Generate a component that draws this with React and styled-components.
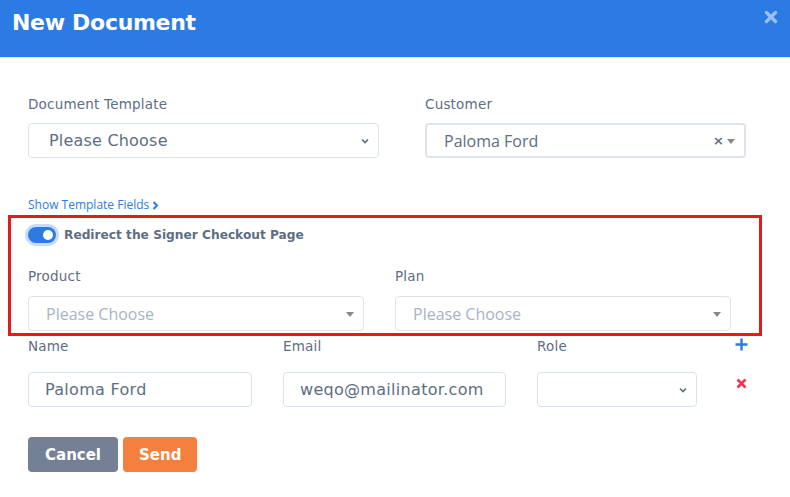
import styled, { createGlobalStyle } from "styled-components";

const GlobalStyle = createGlobalStyle`
  * { box-sizing: border-box; }
  body {
    margin: 0;
    background: #fff;
    font-family: "DejaVu Sans", "Open Sans", sans-serif;
  }
`;

const Modal = styled.div`
  width: 790px;
  height: 497px;
  background: #fff;
  overflow: hidden;
`;

const Header = styled.div`
  height: 58px;
  background: #2c7be5;
  border-bottom: 1px solid #e3e8ef;
  display: flex;
  justify-content: space-between;
  align-items: flex-start;
  padding: 8px 12px 0 12px;
`;

const Title = styled.h1`
  margin: 0;
  color: #fff;
  font-family: "DejaVu Sans", sans-serif;
  font-weight: 700;
  font-size: 22px;
  line-height: 30px;
  letter-spacing: -0.3px;
`;

const CloseBtn = styled.button`
  border: 0;
  background: none;
  padding: 0;
  margin-top: 2px;
  margin-right: 0;
  width: 14px;
  height: 14px;
  cursor: pointer;
`;

const Body = styled.div`
  padding: 36px 28px 0 28px;
`;

const TwoCols = styled.div`
  display: grid;
  grid-template-columns: ${(p) => p.$cols};
  column-gap: ${(p) => p.$gap}px;
`;

const Label = styled.label`
  display: block;
  font-family: "DejaVu Sans", sans-serif;
  font-size: 13.5px;
  letter-spacing: 0.2px;
  line-height: 20px;
  color: #5e6e82;
  margin-bottom: ${(p) => p.$mb ?? 9}px;
`;

const NativeSelect = styled.div`
  height: 35px;
  border: 1px solid #d8e2ef;
  border-radius: 4px;
  display: flex;
  align-items: center;
  justify-content: space-between;
  padding: 0 8px 0 20px;
  font-family: "DejaVu Sans", sans-serif;
  font-size: 16px;
  letter-spacing: 0.2px;
  color: #5e6e82;
  background: #fff;
`;

const Select2 = styled.div`
  height: 35px;
  border: ${(p) => (p.$thick ? "2px" : "1px")} solid #dfe4ec;
  border-radius: 4px;
  display: flex;
  align-items: center;
  padding: 0 9px 0 ${(p) => p.$pl}px;
  font-family: "Open Sans", sans-serif;
  font-size: 16px;
  color: ${(p) => (p.$placeholder ? "#a9b4c2" : "#5e6e82")};
  background: #fff;
`;

const Grow = styled.span`
  flex: 1;
`;

const Clear = styled.span`
  font-size: 13px;
  font-weight: 700;
  color: #5e6e82;
  margin-right: 3px;
  font-family: "DejaVu Sans", sans-serif;
`;

const Caret = styled.span`
  width: 0;
  height: 0;
  border-left: 4px solid transparent;
  border-right: 4px solid transparent;
  border-top: 5px solid #888;
  margin-top: 1px;
`;

const ShowLink = styled.a`
  display: inline-flex;
  align-items: center;
  gap: 3px;
  margin-top: 39px;
  font-family: "Open Sans", sans-serif;
  font-size: 12px;
  line-height: 16px;
  color: #2c7be5;
  text-decoration: none;
`;

const Annotated = styled.section`
  margin: 2px 0 0 -20px;
  width: 754px;
  border: 3px solid #e31b1b;
  padding: 9px 27px 2px 17px;
`;

const SwitchRow = styled.div`
  display: flex;
  align-items: center;
  gap: 8px;
  height: 16px;
  margin-bottom: 23px;
`;

const Switch = styled.span`
  position: relative;
  width: 28px;
  height: 16px;
  border-radius: 8px;
  background: #2c7be5;
  box-shadow: 0 0 0 3px #c9dcf7;
  &::after {
    content: "";
    position: absolute;
    top: 3px;
    right: 3px;
    width: 10px;
    height: 10px;
    border-radius: 50%;
    background: #fff;
  }
`;

const SwitchText = styled.span`
  font-family: "DejaVu Sans", sans-serif;
  font-size: 12.2px;
  font-weight: 700;
  color: #5e6e82;
`;

const Input = styled.div`
  height: 35px;
  border: 1px solid #d8e2ef;
  border-radius: 4px;
  display: flex;
  align-items: center;
  padding: 0 16px;
  font-family: "DejaVu Sans", sans-serif;
  font-size: 16px;
  letter-spacing: 0.3px;
  color: #5e6e82;
  white-space: nowrap;
`;

const IconCell = styled.div`
  display: flex;
  justify-content: flex-end;
  align-items: ${(p) => p.$align};
  padding-right: ${(p) => p.$pr}px;
  padding-top: ${(p) => p.$pt}px;
`;

const Actions = styled.div`
  display: flex;
  gap: 5px;
  margin-top: 30px;
`;

const Button = styled.button`
  height: 35px;
  border: 0;
  border-radius: 4px;
  padding: 0 ${(p) => p.$px}px;
  font-family: "DejaVu Sans", sans-serif;
  font-weight: 700;
  font-size: 15px;
  color: #fff;
  background: ${(p) => p.$bg};
  cursor: pointer;
`;

const Chevron = () => (
  <svg width="10" height="10" viewBox="0 0 10 10">
    <path d="M2 3.5 L5 6.5 L8 3.5" fill="none" stroke="#5e6e82" strokeWidth="1.6" />
  </svg>
);

export default function App() {
  return (
    <Modal>
      <GlobalStyle />
      <Header>
        <Title>New Document</Title>
        <CloseBtn aria-label="close">
          <svg width="14" height="14" viewBox="0 0 14 14">
            <path d="M2.5 2.5 L11.5 11.5 M11.5 2.5 L2.5 11.5" stroke="#9bbff2" strokeWidth="3.4" strokeLinecap="round" />
          </svg>
        </CloseBtn>
      </Header>
      <Body>
        <TwoCols $cols="351px 321px" $gap={46}>
          <div>
            <Label>Document Template</Label>
            <NativeSelect>
              <span>Please Choose</span>
              <Chevron />
            </NativeSelect>
          </div>
          <div>
            <Label>Customer</Label>
            <Select2 $pl={17} $thick style={{ marginTop: 1 }}>
              <Grow>Paloma Ford</Grow>
              <Clear>×</Clear>
              <Caret />
            </Select2>
          </div>
        </TwoCols>

        <ShowLink href="#">
          Show Template Fields
          <svg width="7" height="9" viewBox="0 0 7 9">
            <path d="M1.5 1 L5 4.5 L1.5 8" fill="none" stroke="#2c7be5" strokeWidth="2" />
          </svg>
        </ShowLink>

        <Annotated>
          <SwitchRow>
            <Switch />
            <SwitchText>Redirect the Signer Checkout Page</SwitchText>
          </SwitchRow>
          <TwoCols $cols="336px 336px" $gap={31}>
            <div>
              <Label $mb={10}>Product</Label>
              <Select2 $pl={17} $placeholder>
                <Grow>Please Choose</Grow>
                <Caret />
              </Select2>
            </div>
            <div>
              <Label $mb={10}>Plan</Label>
              <Select2 $pl={17} $placeholder>
                <Grow>Please Choose</Grow>
                <Caret />
              </Select2>
            </div>
          </TwoCols>
        </Annotated>

        <TwoCols $cols="224px 223px 160px 20px" $gap={31} style={{ width: 720 }}>
          <Label $mb={16}>Name</Label>
          <Label $mb={16}>Email</Label>
          <Label $mb={16}>Role</Label>
          <IconCell $align="flex-start" $pr={0} $pt={2}>
            <svg width="13" height="13" viewBox="0 0 13 13">
              <path d="M6.5 0.5 V12.5 M0.5 6.5 H12.5" stroke="#2c7be5" strokeWidth="2.4" />
            </svg>
          </IconCell>
          <Input>Paloma Ford</Input>
          <Input>weqo@mailinator.com</Input>
          <NativeSelect>
            <span />
            <Chevron />
          </NativeSelect>
          <IconCell $align="flex-start" $pr={1} $pt={6}>
            <svg width="11" height="11" viewBox="0 0 11 11">
              <path d="M1.5 1.5 L9.5 9.5 M9.5 1.5 L1.5 9.5" stroke="#e63757" strokeWidth="2.6" />
            </svg>
          </IconCell>
        </TwoCols>

        <Actions>
          <Button $bg="#748194" $px={17}>Cancel</Button>
          <Button $bg="#f5803e" $px={16}>Send</Button>
        </Actions>
      </Body>
    </Modal>
  );
}
